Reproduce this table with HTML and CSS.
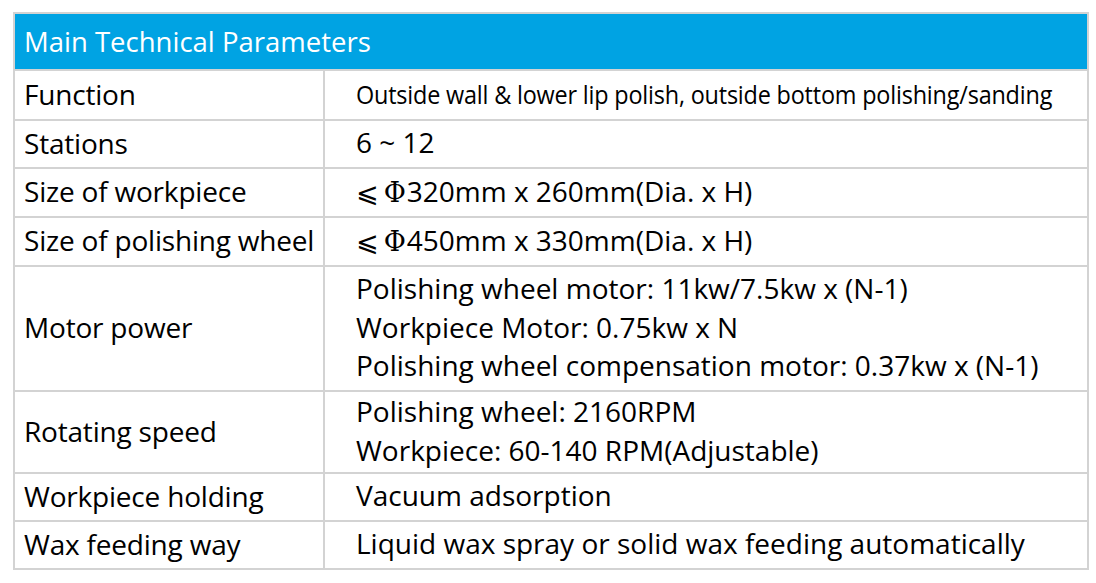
FILE: index.html
```html
<!DOCTYPE html>
<html>
<head>
<meta charset="utf-8">
<link rel="stylesheet" href="styles.css">
</head>
<body>
<table class="spec">
  <colgroup><col class="c1"><col class="c2"></colgroup>
  <thead>
    <tr><th colspan="2" class="title">Main Technical Parameters</th></tr>
  </thead>
  <tbody>
    <tr class="r1"><td class="k">Function</td><td class="v"><span class="narrow">Outside wall &amp; lower lip polish, outside bottom polishing/sanding</span></td></tr>
    <tr class="r2"><td class="k">Stations</td><td class="v">6 ~ 12</td></tr>
    <tr class="r3"><td class="k">Size of workpiece</td><td class="v"><span class="le">⩽</span><span class="phi">Φ</span>320mm x 260mm(Dia. x H)</td></tr>
    <tr class="r4"><td class="k">Size of polishing wheel</td><td class="v"><span class="le">⩽</span><span class="phi">Φ</span>450mm x 330mm(Dia. x H)</td></tr>
    <tr class="r5"><td class="k">Motor power</td><td class="v">Polishing wheel motor: 11kw/7.5kw x (N-1)<br>Workpiece Motor: 0.75kw x N<br>Polishing wheel compensation motor: 0.37kw x (N-1)</td></tr>
    <tr class="r6"><td class="k">Rotating speed</td><td class="v">Polishing wheel: 2160RPM<br>Workpiece: 60-140 RPM(Adjustable)</td></tr>
    <tr class="r7"><td class="k">Workpiece holding</td><td class="v">Vacuum adsorption</td></tr>
    <tr class="r8"><td class="k">Wax feeding way</td><td class="v">Liquid wax spray or solid wax feeding automatically</td></tr>
  </tbody>
</table>
</body>
</html>
```
FILE: styles.css
```css
html, body {
  margin: 0;
  padding: 0;
  background: #ffffff;
}
body {
  padding: 12px 0 0 13px;
  font-family: "Open Sans", "Liberation Sans", sans-serif;
  color: #000;
}
.spec {
  border-collapse: collapse;
  width: 1074px;
  table-layout: fixed;
}
.c1 { width: 310px; }
.c2 { width: 764px; }
.spec th, .spec td {
  border: 2px solid #d3d3d3;
  padding: 0;
  white-space: nowrap;
  overflow: hidden;
}
.title {
  background: #00a3e3;
  color: #fff;
  font-weight: 400;
  text-align: left;
  font-size: 27.5px;
  height: 55px;
  padding-left: 9px !important;
}
.k {
  padding-left: 9px !important;
  padding-bottom: 3px !important;
  font-size: 28px;
  letter-spacing: -0.2px;
}
.v {
  padding-left: 31px !important;
  padding-bottom: 3px !important;
  font-size: 28px;
  line-height: 38.5px;
  letter-spacing: 0;
}
.narrow {
  display: inline-block;
  font-size: 26px;
  letter-spacing: -0.2px;
  transform: scaleX(0.9);
  transform-origin: left center;
}
.le {
  font-family: "DejaVu Sans", sans-serif;
  font-size: 27px;
  line-height: 1;
  margin-right: 5px;
}
.phi {
  font-family: "DejaVu Serif", serif;
  font-size: 27px;
  line-height: 1;
  margin-right: 1px;
}
.r1 { height: 50px; }
.r2 { height: 48px; }
.r3 { height: 49px; }
.r4 { height: 49px; }
.r5 { height: 125px; }
.r6 { height: 78px; }
.r7 { height: 48px; }
.r8 { height: 48px; }
```
